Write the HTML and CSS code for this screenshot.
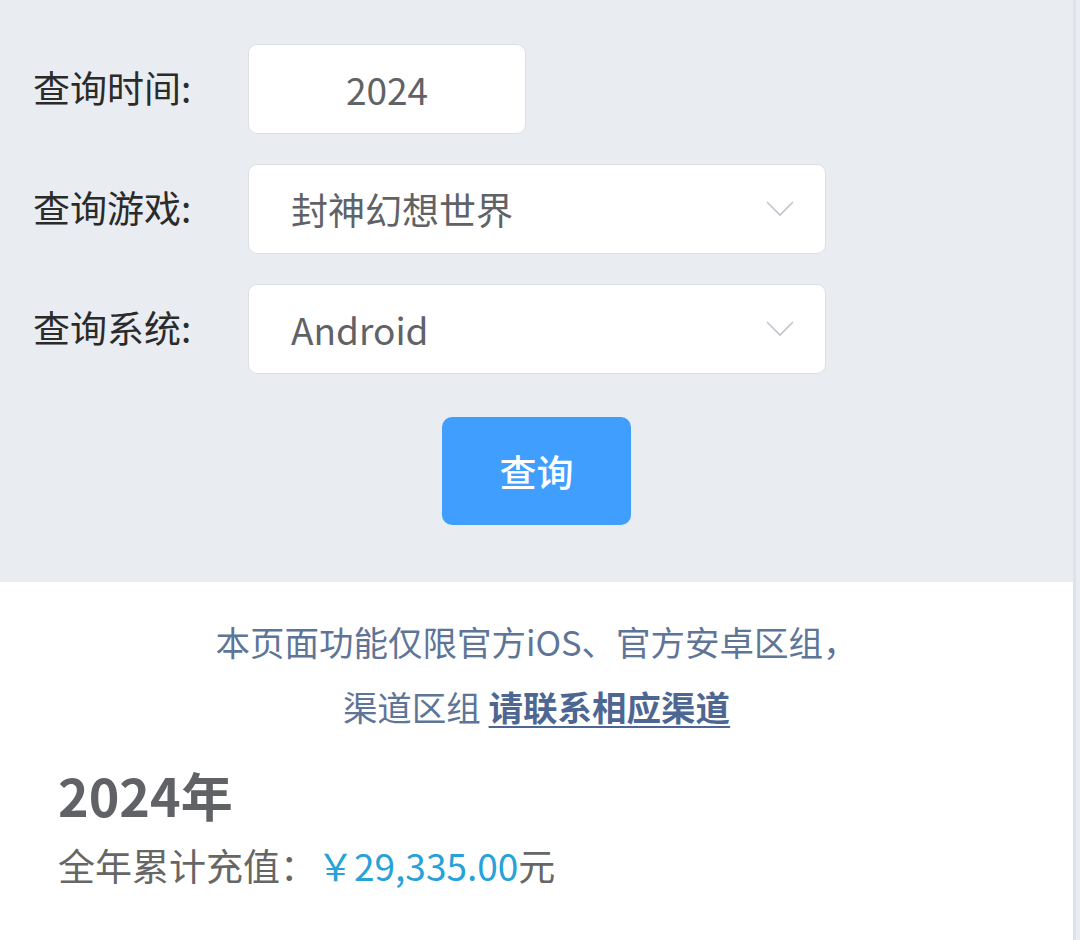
FILE: index.html
```html
<!DOCTYPE html>
<html lang="zh-CN">
<head>
    <meta charset="UTF-8">
    <meta name="viewport" content="width=device-width, initial-scale=1.0">
    <title>充值查询</title>
    <link rel="stylesheet" href="styles.css">
</head>
<body>
    <div class="page">
        <div class="query">
            <div class="row">
                <span class="label">查询时间:</span>
                <div class="field field-year">2024</div>
            </div>
            <div class="row">
                <span class="label">查询游戏:</span>
                <div class="field field-select">
                    <span>封神幻想世界</span>
                    <svg class="chevron" viewBox="0 0 28 16">
                        <polyline points="1,1 14,14 27,1" />
                    </svg>
                </div>
            </div>
            <div class="row">
                <span class="label">查询系统:</span>
                <div class="field field-select">
                    <span>Android</span>
                    <svg class="chevron" viewBox="0 0 28 16">
                        <polyline points="1,1 14,14 27,1" />
                    </svg>
                </div>
            </div>
            <div class="actions">
                <button class="btn-query">查询</button>
            </div>
        </div>

        <div class="result">
            <p class="notice">本页面功能仅限官方iOS、官方安卓区组，<br>渠道区组 <a href="#">请联系相应渠道</a></p>
            <h2 class="year">2024年</h2>
            <p class="total">全年累计充值：<span class="amount">￥29,335.00</span>元</p>
        </div>
    </div>
</body>
</html>
```

FILE: styles.css
```css
body {
    margin: 0;
    background-color: #e9ecf1;
    font-family: "Noto Sans CJK SC", "Noto Sans", sans-serif;
}
.page {
    width: 1073px;
    min-height: 940px;
    border-right: 3px solid #dfe2e8;
    display: flex;
    flex-direction: column;
}
.query {
    display: flex;
    flex-direction: column;
    gap: 30px;
    padding: 44px 0 57px 33px;
}
.row {
    display: flex;
    align-items: center;
}
.label {
    width: 215px;
    font-size: 37px;
    line-height: 1;
    padding-bottom: 4px;
    color: #2b2b2b;
}
.field {
    box-sizing: border-box;
    height: 90px;
    background-color: #fff;
    border: 1px solid #dcdfe6;
    border-radius: 9px;
    font-size: 37px;
    color: #606266;
    display: flex;
    align-items: center;
}
.field-year {
    width: 278px;
    justify-content: center;
}
.field-select {
    width: 578px;
    padding: 0 31px 0 42px;
    justify-content: space-between;
}
.chevron {
    width: 28px;
    height: 16px;
    fill: none;
    stroke: #c0c4cc;
    stroke-width: 1.6;
}
.actions {
    display: flex;
    justify-content: center;
    margin-top: 13px;
    padding-right: 33px;
}
.btn-query {
    width: 189px;
    height: 108px;
    border: none;
    border-radius: 10px;
    background-color: #409eff;
    color: #fff;
    font-family: inherit;
    font-size: 37px;
    font-weight: 500;
    cursor: pointer;
}
.result {
    flex: 1;
    background-color: #fff;
    padding: 27px 58px 20px;
}
.notice {
    margin: 0;
    text-align: center;
    font-size: 34.5px;
    line-height: 65px;
    color: #5e7598;
}
.notice a {
    color: #4d6792;
    font-weight: 700;
    text-decoration: underline;
    text-decoration-thickness: 2px;
    text-underline-offset: 5px;
}
.year {
    margin: 26px 0 0;
    font-size: 52px;
    line-height: 60px;
    font-weight: 700;
    color: #606266;
}
.total {
    margin: 15px 0 0;
    font-size: 37px;
    line-height: 50px;
    color: #666;
}
.amount {
    color: #27a2d8;
}
```
